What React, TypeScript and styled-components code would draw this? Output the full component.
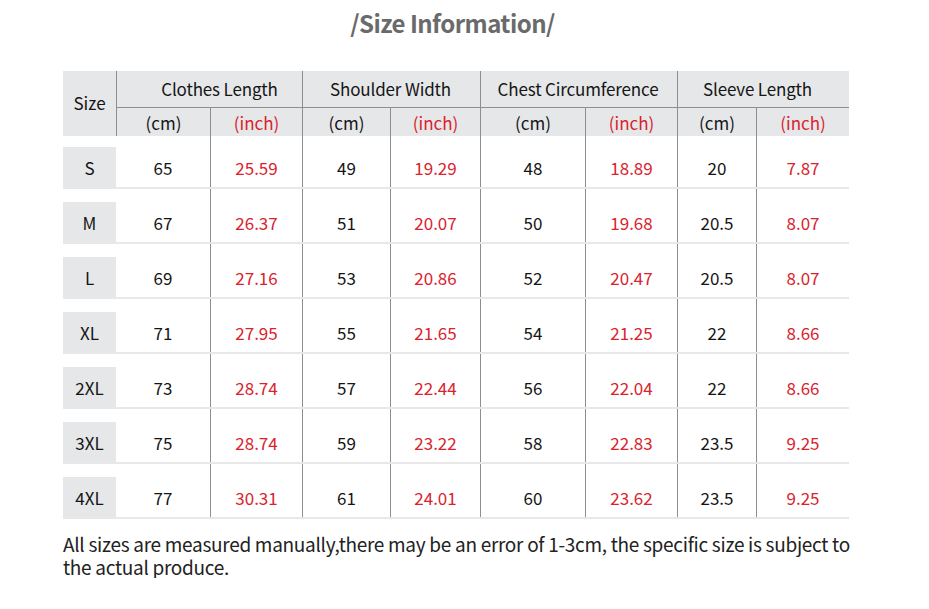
import React from "react";
import styled, { createGlobalStyle, css } from "styled-components";

const GlobalStyle = createGlobalStyle`
  html, body { margin: 0; padding: 0; background: #ffffff; }
  body { font-family: "Noto Sans CJK SC", "Noto Sans", sans-serif; }
`;

const COLS = "53px 94px 92px 88px 90px 105px 92px 79px 93px";
const LINE = "#8e8e8e";
const HEAD_BG = "#e6e7e9";
const RED = "#d9232d";
const INK = "#151515";

const Page = styled.div`
  width: 786px;
  padding: 6px 0 0 63px;
  display: flex;
  flex-direction: column;
`;

const Title = styled.h1`
  margin: 0;
  font-size: 24px;
  line-height: 34px;
  letter-spacing: -0.55px;
  font-weight: 700;
  color: #6a6a6a;
  text-align: center;
  padding-right: 7px;
`;

const Table = styled.div`
  margin-top: 31px;
  display: flex;
  flex-direction: column;
`;

const Header = styled.div`
  display: grid;
  grid-template-columns: ${COLS};
  grid-template-rows: 37px 28px;
  background: ${HEAD_BG};
  color: ${INK};
`;

const SizeHead = styled.div`
  grid-row: 1 / 3;
  grid-column: 1;
  display: flex;
  align-items: center;
  justify-content: center;
  font-size: 17px;
  padding-bottom: 2px;
`;

const GroupHead = styled.div<{ $col: number; $shift?: number }>`
  grid-row: 1;
  grid-column: ${(p) => p.$col} / span 2;
  border-left: 1px solid ${LINE};
  border-bottom: 1px solid ${LINE};
  display: flex;
  align-items: center;
  justify-content: center;
  font-size: 17px;
  letter-spacing: -0.15px;
  padding-bottom: 1px;
  padding-left: ${(p) => (p.$shift && p.$shift > 0 ? p.$shift * 2 : 0)}px;
  padding-right: ${(p) => (p.$shift && p.$shift < 0 ? -p.$shift * 2 : 0)}px;
`;

const SubHead = styled.div<{ $inch?: boolean }>`
  grid-row: 2;
  border-left: 1px solid ${LINE};
  display: flex;
  align-items: center;
  justify-content: center;
  font-size: 17px;
  color: ${(p) => (p.$inch ? RED : INK)};
`;

const Row = styled.div<{ $first?: boolean }>`
  display: grid;
  grid-template-columns: ${COLS};
  height: ${(p) => (p.$first ? 53 : 55)}px;
  background: linear-gradient(#e8e8e8, #e8e8e8) bottom / 100% 2px no-repeat;
`;

const SizeCell = styled.div<{ $first?: boolean }>`
  margin-top: ${(p) => (p.$first ? 11 : 13)}px;
  height: 40px;
  background: ${HEAD_BG};
  display: flex;
  align-items: center;
  justify-content: center;
  font-size: 17px;
  color: ${INK};
`;

const Cell = styled.div<{ $inch?: boolean; $divider?: boolean; $first?: boolean }>`
  ${(p) =>
    p.$divider &&
    css`
      border-left: 1px solid ${LINE};
    `}
  padding-top: ${(p) => (p.$first ? 11 : 13)}px;
  height: 40px;
  display: flex;
  align-items: center;
  justify-content: center;
  font-size: 17px;
  color: ${(p) => (p.$inch ? RED : INK)};
`;

const Note = styled.p`
  margin: 13px 0 0;
  font-size: 19px;
  line-height: 23px;
  letter-spacing: -0.29px;
  color: #222222;
  white-space: nowrap;
`;

const groups = [
  { name: "Clothes Length", shift: 10 },
  { name: "Shoulder Width", shift: -1 },
  { name: "Chest Circumference", shift: -1 },
  { name: "Sleeve Length", shift: -6 },
];

const rows: [string, string[]][] = [
  ["S", ["65", "25.59", "49", "19.29", "48", "18.89", "20", "7.87"]],
  ["M", ["67", "26.37", "51", "20.07", "50", "19.68", "20.5", "8.07"]],
  ["L", ["69", "27.16", "53", "20.86", "52", "20.47", "20.5", "8.07"]],
  ["XL", ["71", "27.95", "55", "21.65", "54", "21.25", "22", "8.66"]],
  ["2XL", ["73", "28.74", "57", "22.44", "56", "22.04", "22", "8.66"]],
  ["3XL", ["75", "28.74", "59", "23.22", "58", "22.83", "23.5", "9.25"]],
  ["4XL", ["77", "30.31", "61", "24.01", "60", "23.62", "23.5", "9.25"]],
];

export default function App() {
  return (
    <>
      <GlobalStyle />
      <Page>
        <Title>/Size Information/</Title>
        <Table>
          <Header>
            <SizeHead>Size</SizeHead>
            {groups.map((g, i) => (
              <GroupHead key={g.name} $col={2 + i * 2} $shift={g.shift}>
                {g.name}
              </GroupHead>
            ))}
            {groups.map((g) => (
              <React.Fragment key={g.name + "-sub"}>
                <SubHead>(cm)</SubHead>
                <SubHead $inch>(inch)</SubHead>
              </React.Fragment>
            ))}
          </Header>
          {rows.map(([size, values], r) => (
            <Row key={size} $first={r === 0}>
              <SizeCell $first={r === 0}>{size}</SizeCell>
              {values.map((v, i) => (
                <Cell key={i} $inch={i % 2 === 1} $divider={i > 0} $first={r === 0}>
                  {v}
                </Cell>
              ))}
            </Row>
          ))}
        </Table>
        <Note>
          All sizes are measured manually,there may be an error of 1-3cm, the specific size is subject to
          <br />
          the actual produce.
        </Note>
      </Page>
    </>
  );
}
